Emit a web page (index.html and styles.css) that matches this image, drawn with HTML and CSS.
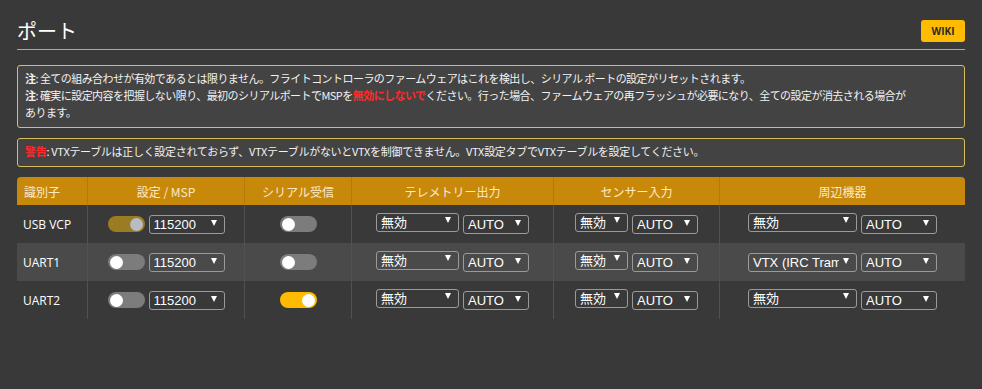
FILE: index.html
```html
<!DOCTYPE html>
<html lang="ja">
<head>
  <meta charset="UTF-8">
  <title>ポート</title>
  <link rel="stylesheet" href="styles.css">
</head>
<body>
  <div class="tab">
    <div class="tab-header">
      <h1>ポート</h1>
      <a href="#" class="wiki">WIKI</a>
    </div>

    <div class="note">
      <p><b>注</b>: 全ての組み合わせが有効であるとは限りません。フライトコントローラのファームウェアはこれを検出し、シリアル ポートの設定がリセットされます。</p>
      <p><b>注</b>: 確実に設定内容を把握しない限り、最初のシリアルポートでMSPを<span class="red">無効にしないで</span>ください。行った場合、ファームウェアの再フラッシュが必要になり、全ての設定が消去される場合が<br>あります。</p>
    </div>

    <div class="note">
      <p><span class="red">警告</span>:&nbsp;VTXテーブルは正しく設定されておらず、VTXテーブルがないとVTXを制御できません。VTX設定タブでVTXテーブルを設定してください。</p>
    </div>

    <table class="ports">
      <colgroup>
        <col style="width:70px">
        <col style="width:157px">
        <col style="width:107px">
        <col style="width:202px">
        <col style="width:166px">
        <col style="width:246px">
      </colgroup>
      <thead>
        <tr>
          <th class="first">識別子</th>
          <th>設定 / MSP</th>
          <th>シリアル受信</th>
          <th>テレメトリー出力</th>
          <th>センサー入力</th>
          <th class="last">周辺機器</th>
        </tr>
      </thead>
      <tbody>
        <tr>
          <td class="ident">USB VCP</td>
          <td><div class="cell">
            <span class="switch on locked"><span class="knob"></span></span>
            <span class="sel w75"><select><option>115200</option></select></span>
          </div></td>
          <td><div class="cell"><span class="switch"><span class="knob"></span></span></div></td>
          <td><div class="cell">
            <span class="sel w83 ja"><select><option>無効</option></select></span>
            <span class="sel w66"><select><option>AUTO</option></select></span>
          </div></td>
          <td><div class="cell">
            <span class="sel w53 ja"><select><option>無効</option></select></span>
            <span class="sel w66"><select><option>AUTO</option></select></span>
          </div></td>
          <td><div class="cell">
            <span class="sel w109 ja"><select><option>無効</option></select></span>
            <span class="sel w76"><select><option>AUTO</option></select></span>
          </div></td>
        </tr>
        <tr>
          <td class="ident">UART1</td>
          <td><div class="cell">
            <span class="switch"><span class="knob"></span></span>
            <span class="sel w75"><select><option>115200</option></select></span>
          </div></td>
          <td><div class="cell"><span class="switch"><span class="knob"></span></span></div></td>
          <td><div class="cell">
            <span class="sel w83 ja"><select><option>無効</option></select></span>
            <span class="sel w66"><select><option>AUTO</option></select></span>
          </div></td>
          <td><div class="cell">
            <span class="sel w53 ja"><select><option>無効</option></select></span>
            <span class="sel w66"><select><option>AUTO</option></select></span>
          </div></td>
          <td><div class="cell">
            <span class="sel w109"><select><option>VTX (IRC Tramp)</option></select></span>
            <span class="sel w76"><select><option>AUTO</option></select></span>
          </div></td>
        </tr>
        <tr>
          <td class="ident">UART2</td>
          <td><div class="cell">
            <span class="switch"><span class="knob"></span></span>
            <span class="sel w75"><select><option>115200</option></select></span>
          </div></td>
          <td><div class="cell"><span class="switch on"><span class="knob"></span></span></div></td>
          <td><div class="cell">
            <span class="sel w83 ja"><select><option>無効</option></select></span>
            <span class="sel w66"><select><option>AUTO</option></select></span>
          </div></td>
          <td><div class="cell">
            <span class="sel w53 ja"><select><option>無効</option></select></span>
            <span class="sel w66"><select><option>AUTO</option></select></span>
          </div></td>
          <td><div class="cell">
            <span class="sel w109 ja"><select><option>無効</option></select></span>
            <span class="sel w76"><select><option>AUTO</option></select></span>
          </div></td>
        </tr>
      </tbody>
    </table>
  </div>
</body>
</html>
```

FILE: styles.css
```css
body {
  background-color: #393939;
  color: #f0f0f0;
  font-family: "Open Sans", "Noto Sans CJK JP", sans-serif;
  margin: 0;
}

.tab {
  padding: 0 17px;
}

.tab-header {
  display: flex;
  justify-content: space-between;
  align-items: center;
  height: 37px;
  padding-top: 12px;
  border-bottom: 1px solid #e0a812;
}

.tab-header h1 {
  margin: 0;
  font-family: "Noto Sans CJK JP", sans-serif;
  font-size: 20px;
  font-weight: 400;
  color: #ffffff;
}

.wiki {
  display: flex;
  align-items: center;
  justify-content: center;
  width: 44px;
  height: 22px;
  background-color: #ffbb00;
  border-radius: 3px;
  color: #2a2a2a;
  font-family: "Open Sans", sans-serif;
  font-size: 10px;
  font-weight: bold;
  text-decoration: none;
}

.note {
  margin-top: 15px;
  padding: 4px 7px 6px;
  background-color: #434343;
  border: 1px solid #d8bd5c;
  border-radius: 3px;
  font-family: "Noto Sans CJK JP", sans-serif;
  font-size: 11px;
  letter-spacing: -0.55px;
  line-height: 17px;
  color: #f2f2f2;
}

.note + .note {
  margin-top: 10px;
  letter-spacing: -0.3px;
}

.note p {
  margin: 0;
}

.note b {
  font-weight: bold;
}

.red {
  color: #ff2b2b;
  font-weight: bold;
}

.ports {
  margin-top: 10px;
  width: 948px;
  table-layout: fixed;
  border-collapse: separate;
  border-spacing: 0;
}

.ports th {
  height: 28px;
  padding: 0;
  background-color: #c8890b;
  color: #fde9c4;
  font-family: "Noto Sans CJK JP", sans-serif;
  font-size: 12px;
  font-weight: 400;
  text-align: center;
  border-left: 1px solid #b37a0a;
}

.ports th.first {
  text-align: left;
  padding-left: 7px;
  border-left: 0;
  border-top-left-radius: 4px;
}

.ports th.last {
  border-top-right-radius: 4px;
}

.ports td {
  height: 38px;
  padding: 0;
  border-left: 1px solid #515151;
}

.ports td.ident {
  border-left: 0;
  padding-left: 6px;
  font-size: 12px;
  color: #ffffff;
}

.ports tbody tr:nth-child(2) td {
  background-color: #4a4a4a;
}

.cell {
  display: flex;
  justify-content: center;
  align-items: center;
  gap: 4px;
}

.switch {
  display: flex;
  align-items: center;
  justify-content: flex-start;
  box-sizing: border-box;
  width: 37px;
  height: 16px;
  padding: 0 2px;
  border-radius: 8px;
  background-color: #7c7c7c;
}

.switch .knob {
  width: 13px;
  height: 13px;
  border-radius: 50%;
  background-color: #ffffff;
}

.switch.on {
  justify-content: flex-end;
  background-color: #ffbb00;
}

.switch.locked {
  background-color: #9a7c22;
}

.switch.locked .knob {
  background-color: #b9bcc4;
}

.sel {
  display: inline-flex;
  align-items: center;
  box-sizing: border-box;
  height: 19px;
  border: 1px solid #9a9a9a;
  border-radius: 3px;
}

.sel::after {
  content: "";
  flex: none;
  margin: 0 7px 2px 4px;
  border-left: 3px solid transparent;
  border-right: 3px solid transparent;
  border-top: 6px solid #ffffff;
}

.sel select {
  appearance: none;
  -webkit-appearance: none;
  flex: 1;
  min-width: 0;
  height: 100%;
  padding: 0 0 0 4px;
  border: 0;
  background: transparent;
  color: #ffffff;
  font-family: "Liberation Sans", "Noto Sans CJK JP", sans-serif;
  font-size: 13px;
  outline: none;
}

.sel.ja {
  margin-bottom: 3px;
}

.sel.ja::after {
  margin-bottom: 5px;
}

.w53 { width: 53px; }
.w66 { width: 66px; }
.w75 { width: 76px; }
.w76 { width: 76px; }
.w83 { width: 83px; }
.w109 { width: 109px; }
```
